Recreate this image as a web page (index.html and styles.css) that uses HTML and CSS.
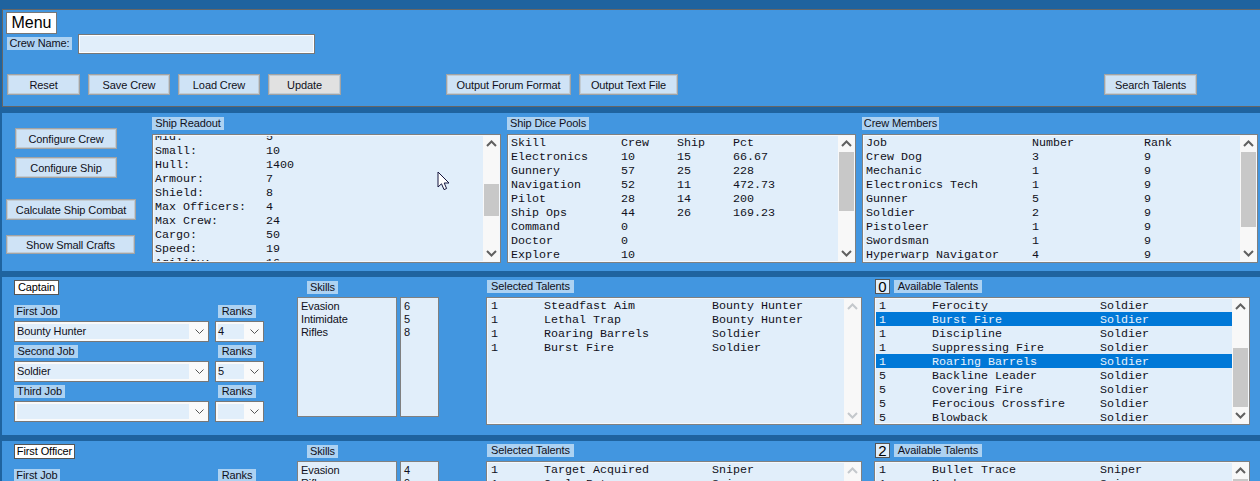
FILE: index.html
```html
<!DOCTYPE html>
<html>
<head>
    <title>Crew Builder</title>
    <link rel="stylesheet" href="styles.css">
</head>
<body>
    <svg width="0" height="0" class="defs">
        <symbol id="up" viewBox="0 0 11 7"><path d="M1 6 L5.5 1.5 L10 6" fill="none" stroke-width="2"/></symbol>
        <symbol id="down" viewBox="0 0 11 7"><path d="M1 1 L5.5 5.5 L10 1" fill="none" stroke-width="2"/></symbol>
        <symbol id="drop" viewBox="0 0 9 5"><path d="M0.5 0.5 L4.5 4.5 L8.5 0.5" fill="none" stroke="#555" stroke-width="1"/></symbol>
    </svg>

    <div class="panel menu">
        <div class="title">Menu</div>
        <div class="name-row">
            <span class="label crew-name">Crew Name:</span>
            <input type="text" class="name-input" disabled>
        </div>
        <div class="btn-row">
            <button class="btn w73">Reset</button>
            <button class="btn w82">Save Crew</button>
            <button class="btn w82">Load Crew</button>
            <button class="btn w73 grey">Update</button>
            <button class="btn w125 after-update">Output Forum Format</button>
            <button class="btn w99">Output Text File</button>
            <button class="btn w93 after-output">Search Talents</button>
        </div>
    </div>

    <div class="panel ship">
        <div class="side">
            <button class="btn narrow first">Configure Crew</button>
            <button class="btn narrow second">Configure Ship</button>
            <button class="btn wide third">Calculate Ship Combat</button>
            <button class="btn wide fourth">Show Small Crafts</button>
        </div>
        <div class="group w349">
            <span class="label l-readout">Ship Readout</span>
            <div class="list ship-list">
                <div class="rows scrolled">
                    <div class="row readout"><span>Mid:</span><span>5</span></div>
                    <div class="row readout"><span>Small:</span><span>10</span></div>
                    <div class="row readout"><span>Hull:</span><span>1400</span></div>
                    <div class="row readout"><span>Armour:</span><span>7</span></div>
                    <div class="row readout"><span>Shield:</span><span>8</span></div>
                    <div class="row readout"><span>Max Officers:</span><span>4</span></div>
                    <div class="row readout"><span>Max Crew:</span><span>24</span></div>
                    <div class="row readout"><span>Cargo:</span><span>50</span></div>
                    <div class="row readout"><span>Speed:</span><span>19</span></div>
                    <div class="row readout"><span>Agility:</span><span>16</span></div>
                </div>
                <div class="sb">
                    <svg class="arrow"><use href="#up"/></svg>
                    <div class="thumb t-readout"></div>
                    <svg class="arrow end"><use href="#down"/></svg>
                </div>
            </div>
        </div>
        <div class="group w349 gap6">
            <span class="label l-dice">Ship Dice Pools</span>
            <div class="list ship-list">
                <div class="rows">
                    <div class="row dice"><span>Skill</span><span>Crew</span><span>Ship</span><span>Pct</span></div>
                    <div class="row dice"><span>Electronics</span><span>10</span><span>15</span><span>66.67</span></div>
                    <div class="row dice"><span>Gunnery</span><span>57</span><span>25</span><span>228</span></div>
                    <div class="row dice"><span>Navigation</span><span>52</span><span>11</span><span>472.73</span></div>
                    <div class="row dice"><span>Pilot</span><span>28</span><span>14</span><span>200</span></div>
                    <div class="row dice"><span>Ship Ops</span><span>44</span><span>26</span><span>169.23</span></div>
                    <div class="row dice"><span>Command</span><span>0</span></div>
                    <div class="row dice"><span>Doctor</span><span>0</span></div>
                    <div class="row dice"><span>Explore</span><span>10</span></div>
                </div>
                <div class="sb">
                    <svg class="arrow"><use href="#up"/></svg>
                    <div class="thumb t-dice"></div>
                    <svg class="arrow end"><use href="#down"/></svg>
                </div>
            </div>
        </div>
        <div class="group w396 gap6">
            <span class="label l-members">Crew Members</span>
            <div class="list ship-list">
                <div class="rows">
                    <div class="row members"><span>Job</span><span>Number</span><span>Rank</span></div>
                    <div class="row members"><span>Crew Dog</span><span>3</span><span>9</span></div>
                    <div class="row members"><span>Mechanic</span><span>1</span><span>9</span></div>
                    <div class="row members"><span>Electronics Tech</span><span>1</span><span>9</span></div>
                    <div class="row members"><span>Gunner</span><span>5</span><span>9</span></div>
                    <div class="row members"><span>Soldier</span><span>2</span><span>9</span></div>
                    <div class="row members"><span>Pistoleer</span><span>1</span><span>9</span></div>
                    <div class="row members"><span>Swordsman</span><span>1</span><span>9</span></div>
                    <div class="row members"><span>Hyperwarp Navigator</span><span>4</span><span>9</span></div>
                </div>
                <div class="sb">
                    <svg class="arrow"><use href="#up"/></svg>
                    <div class="thumb t-members"></div>
                    <svg class="arrow end"><use href="#down"/></svg>
                </div>
            </div>
        </div>
    </div>

    <div class="panel officer">
        <div class="jobs">
            <div class="rank-title t-captain">Captain</div>
            <div class="job-grid">
                <span class="label l-first">First Job</span><span class="label l-ranks">Ranks</span>
                <div class="combo"><span class="field">Bounty Hunter</span><svg class="drop"><use href="#drop"/></svg></div>
                <div class="combo small"><span class="field">4</span><svg class="drop"><use href="#drop"/></svg></div>
                <span class="label l-second">Second Job</span><span class="label l-ranks">Ranks</span>
                <div class="combo"><span class="field">Soldier</span><svg class="drop"><use href="#drop"/></svg></div>
                <div class="combo small"><span class="field">5</span><svg class="drop"><use href="#drop"/></svg></div>
                <span class="label l-third">Third Job</span><span class="label l-ranks">Ranks</span>
                <div class="combo"><span class="field"></span><svg class="drop"><use href="#drop"/></svg></div>
                <div class="combo small"><span class="field"></span><svg class="drop"><use href="#drop"/></svg></div>
            </div>
        </div>
        <div class="skills">
            <span class="label l-skills">Skills</span>
            <div class="skill-lists">
                <div class="skill-box names">Evasion<br>Intimidate<br>Rifles</div>
                <div class="skill-box values">6<br>5<br>8</div>
            </div>
        </div>
        <div class="talents first-talents">
            <div class="talent-head"><span class="label l-selected">Selected Talents</span></div>
            <div class="list talent-list">
                <div class="rows">
                    <div class="row talent"><span>1</span><span>Steadfast Aim</span><span>Bounty Hunter</span></div>
                    <div class="row talent"><span>1</span><span>Lethal Trap</span><span>Bounty Hunter</span></div>
                    <div class="row talent"><span>1</span><span>Roaring Barrels</span><span>Soldier</span></div>
                    <div class="row talent"><span>1</span><span>Burst Fire</span><span>Soldier</span></div>
                </div>
                <div class="sb off">
                    <svg class="arrow"><use href="#up"/></svg>
                    <svg class="arrow end"><use href="#down"/></svg>
                </div>
            </div>
        </div>
        <div class="talents second-talents">
            <div class="talent-head"><span class="count">0</span><span class="label l-available">Available Talents</span></div>
            <div class="list talent-list">
                <div class="rows">
                    <div class="row talent avail"><span>1</span><span>Ferocity</span><span>Soldier</span></div>
                    <div class="row talent avail on"><span>1</span><span>Burst Fire</span><span>Soldier</span></div>
                    <div class="row talent avail"><span>1</span><span>Discipline</span><span>Soldier</span></div>
                    <div class="row talent avail"><span>1</span><span>Suppressing Fire</span><span>Soldier</span></div>
                    <div class="row talent avail on"><span>1</span><span>Roaring Barrels</span><span>Soldier</span></div>
                    <div class="row talent avail"><span>5</span><span>Backline Leader</span><span>Soldier</span></div>
                    <div class="row talent avail"><span>5</span><span>Covering Fire</span><span>Soldier</span></div>
                    <div class="row talent avail"><span>5</span><span>Ferocious Crossfire</span><span>Soldier</span></div>
                    <div class="row talent avail"><span>5</span><span>Blowback</span><span>Soldier</span></div>
                </div>
                <div class="sb">
                    <svg class="arrow"><use href="#up"/></svg>
                    <div class="thumb t-avail"></div>
                    <svg class="arrow end"><use href="#down"/></svg>
                </div>
            </div>
        </div>
    </div>

    <div class="panel officer">
        <div class="jobs">
            <div class="rank-title t-first">First Officer</div>
            <div class="job-grid">
                <span class="label l-first">First Job</span><span class="label l-ranks">Ranks</span>
            </div>
        </div>
        <div class="skills">
            <span class="label l-skills">Skills</span>
            <div class="skill-lists">
                <div class="skill-box names">Evasion<br>Rifles</div>
                <div class="skill-box values">4<br>9</div>
            </div>
        </div>
        <div class="talents first-talents">
            <div class="talent-head"><span class="label l-selected">Selected Talents</span></div>
            <div class="list talent-list">
                <div class="rows">
                    <div class="row talent"><span>1</span><span>Target Acquired</span><span>Sniper</span></div>
                    <div class="row talent"><span>1</span><span>Cycle Rate</span><span>Sniper</span></div>
                </div>
                <div class="sb off">
                    <svg class="arrow"><use href="#up"/></svg>
                </div>
            </div>
        </div>
        <div class="talents second-talents">
            <div class="talent-head"><span class="count">2</span><span class="label l-available">Available Talents</span></div>
            <div class="list talent-list">
                <div class="rows">
                    <div class="row talent avail"><span>1</span><span>Bullet Trace</span><span>Sniper</span></div>
                    <div class="row talent avail"><span>1</span><span>Marksman</span><span>Sniper</span></div>
                </div>
                <div class="sb">
                    <svg class="arrow"><use href="#up"/></svg>
                    <div class="thumb t-avail2"></div>
                </div>
            </div>
        </div>
    </div>

    <svg class="cursor" width="14" height="21" viewBox="0 0 14 21">
        <path d="M1 1 L1 16 L4.5 12.8 L7 18.6 L9.6 17.5 L7.2 12 L12 12 Z" fill="#fff" stroke="#14143c" stroke-width="1"/>
    </svg>
</body>
</html>
```

FILE: styles.css
```css
html, body {
    margin: 0;
    height: 481px;
    overflow: hidden;
}
body {
    background-color: #1f639f;
    padding-top: 9px;
    box-sizing: border-box;
    font-family: "Liberation Sans", Arial, sans-serif;
    font-size: 11px;
    letter-spacing: -0.1px;
    color: #101020;
}
.defs {
    display: block;
    height: 0;
}
.panel {
    margin-left: 2px;
    margin-bottom: 6px;
    height: 158px;
    box-sizing: border-box;
    background-color: #4296e0;
}
.label {
    display: block;
    height: 13px;
    line-height: 13px;
    background-color: #add2f2;
    text-align: center;
    white-space: nowrap;
}

/* menu */
.menu {
    height: 98px;
    border: 1px solid #666;
    border-right: 0;
    padding: 2px 0 0 4px;
}
.title {
    width: 49px;
    height: 20px;
    margin-left: -1px;
    border: 1px solid #777;
    background-color: #fff;
    color: #000;
    font-size: 16px;
    letter-spacing: 0;
    line-height: 20px;
    text-align: center;
}
.name-row {
    display: flex;
}
.crew-name {
    width: 65px;
    margin-top: 3px;
}
.name-input {
    width: 237px;
    height: 20px;
    box-sizing: border-box;
    margin: 0 0 0 6px;
    padding: 0;
    border: 1px solid #777;
    outline: 1px solid #fff;
    outline-offset: -2px;
    background-color: #e1eefa;
}
.btn-row {
    display: flex;
    gap: 8px;
    margin-top: 20px;
}
.btn {
    display: block;
    height: 21px;
    box-sizing: border-box;
    margin: 0;
    padding: 0;
    border: 1px solid #a3a3a3;
    box-shadow: inset 0 0 0 1px #c2ccd4;
    background-color: #cfe3f6;
    color: #101020;
    font-family: "Liberation Sans", Arial, sans-serif;
    font-size: 11px;
    letter-spacing: -0.1px;
    white-space: nowrap;
}
.btn.grey {
    background-color: #e1e1e1;
}
.w73 { width: 73px; }
.w82 { width: 82px; }
.w93 { width: 93px; }
.w99 { width: 99px; }
.w125 { width: 125px; }
.after-update { margin-left: 97px; }
.after-output { margin-left: 418px; }

/* ship row */
.ship {
    display: flex;
    padding-top: 4px;
}
.side {
    width: 150px;
    box-sizing: border-box;
    padding-left: 4px;
}
.narrow {
    width: 102px;
    margin-left: 9px;
}
.wide {
    width: 130px;
}
.first { margin-top: 11px; }
.second { margin-top: 8px; }
.third { margin-top: 21px; }
.fourth {
    margin-top: 15px;
    width: 129px;
    height: 19px;
}
.w349 { width: 349px; }
.w396 { width: 396px; }
.gap6 { margin-left: 6px; }
.l-readout { width: 72px; }
.l-dice { width: 82px; }
.l-members { width: 77px; }

/* lists */
.list {
    display: flex;
    box-sizing: border-box;
    margin-top: 4px;
    border: 1px solid #808080;
    outline: 1px solid #f4f8fc;
    outline-offset: -2px;
    background-color: #e1eefa;
    overflow: hidden;
    font-family: "Liberation Mono", "Courier New", monospace;
    font-size: 11.67px;
    letter-spacing: 0;
}
.ship-list {
    height: 129px;
}
.rows {
    flex: 1;
    min-width: 0;
}
.scrolled {
    margin-top: -6px;
}
.row {
    display: grid;
    height: 14px;
    line-height: 17px;
    padding-left: 3px;
    white-space: pre;
}
.readout {
    grid-template-columns: 111px 1fr;
    padding-left: 2px;
}
.dice { grid-template-columns: 110px 56px 56px 1fr; }
.members { grid-template-columns: 166px 112px 1fr; }
.sb {
    display: flex;
    flex-direction: column;
    flex: none;
    width: 17px;
    background-color: #f8f8f8;
    stroke: #606060;
}
.sb.off {
    stroke: #c4c8cc;
}
.arrow {
    display: block;
    flex: none;
    width: 11px;
    height: 7px;
    margin: 5px 3px;
    stroke: inherit;
}
.arrow.end {
    margin-top: auto;
}
.thumb {
    flex: none;
    width: 15px;
    margin-left: 1px;
    background-color: #c8c8c8;
}
.t-readout { height: 32px; margin-top: 32px; }
.t-dice { height: 59px; }
.t-members { height: 75px; }
.t-avail { height: 59px; margin-top: 33px; }
.t-avail2 { height: 59px; }

/* officer blocks */
.officer {
    display: flex;
    padding-top: 3px;
}
.jobs {
    width: 250px;
    margin-left: 12px;
}
.rank-title {
    height: 13px;
    line-height: 13px;
    border: 1px solid #555;
    background-color: #fff;
    color: #000;
    text-align: center;
    white-space: nowrap;
    box-sizing: content-box;
}
.t-captain { width: 43px; }
.t-first { width: 59px; }
.job-grid {
    display: grid;
    grid-template-columns: 195px 49px;
    column-gap: 6px;
    grid-auto-rows: 13px 21px;
    row-gap: 3px;
    margin-top: 10px;
}
.l-first { width: 46px; }
.l-second { width: 64px; }
.l-third { width: 51px; }
.l-ranks {
    width: 38px;
    margin-left: 3px;
}
.combo {
    display: flex;
    align-items: center;
    height: 21px;
    box-sizing: border-box;
    border: 1px solid #777;
    background-color: #fafafa;
    padding: 2px 0 2px 2px;
}
.field {
    flex: 1;
    height: 15px;
    line-height: 15px;
    background-color: #e1eefa;
}
.drop {
    flex: none;
    width: 9px;
    height: 5px;
    margin: 0 4px 0 6px;
}
.skills {
    width: 142px;
    margin-left: 33px;
}
.l-skills {
    width: 31px;
    margin: 1px 0 0 10px;
}
.skill-lists {
    display: flex;
    gap: 3px;
    margin-top: 3px;
}
.skill-box {
    height: 120px;
    box-sizing: border-box;
    border: 1px solid #808080;
    padding: 2px 3px;
    background-color: #e1eefa;
    line-height: 13px;
}
.names { width: 100px; }
.values { width: 39px; }
.talents {
    width: 376px;
}
.first-talents { margin-left: 47px; }
.second-talents { margin-left: 12px; }
.talent-head {
    display: flex;
    height: 17px;
}
.l-selected {
    width: 87px;
    margin-left: 1px;
}
.l-available {
    width: 88px;
    margin-left: 4px;
}
.count {
    width: 13px;
    height: 13px;
    margin: -1px 0 0 1px;
    border: 1px solid #555;
    background-color: #e1eefa;
    color: #000;
    font-size: 15px;
    letter-spacing: 0;
    line-height: 14px;
    text-align: center;
}
.talent-list {
    height: 128px;
    margin-top: 0;
}
.talent {
    grid-template-columns: 53px 168px 1fr;
    padding-left: 4px;
}
.talent.avail {
    padding-left: 3px;
    margin-left: 1px;
    grid-template-columns: 53px 168px 1fr;
}
.talent.on {
    background-color: #0078d7;
    color: #e8f2fb;
}
.cursor {
    position: absolute;
    left: 437px;
    top: 171px;
}
```
